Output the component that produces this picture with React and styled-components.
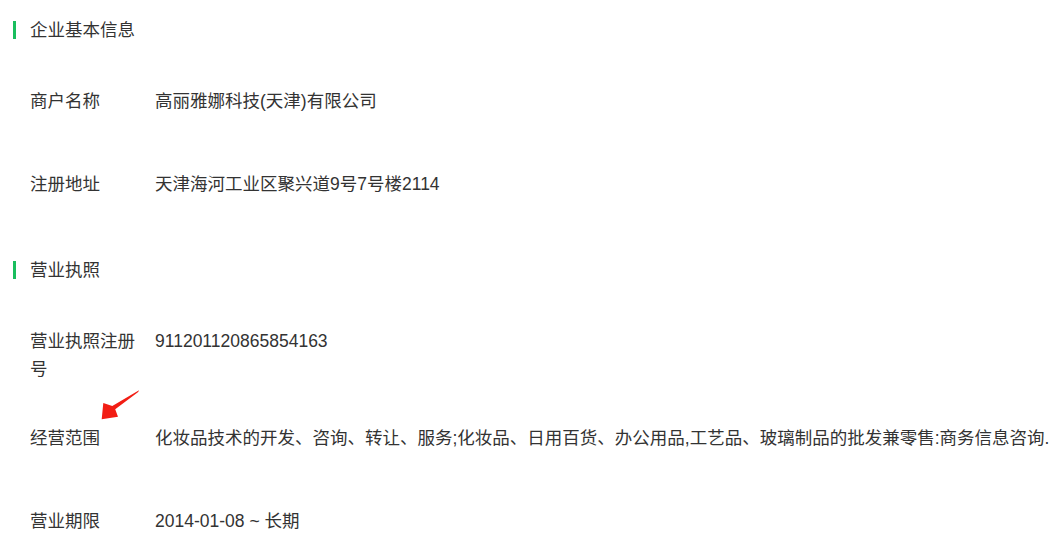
import React from "react";
import styled, { createGlobalStyle } from "styled-components";

const Global = createGlobalStyle`
  html, body { margin: 0; padding: 0; background: #fff; }
  body {
    font-family: "Liberation Sans", "Noto Sans CJK SC", sans-serif;
    color: #333;
    font-size: 17.5px;
    line-height: 28px;
  }
`;

const Page = styled.div`
  display: flex;
  flex-direction: column;
  gap: 7.5px;
  width: 1064px;
`;

const Section = styled.section`
  display: flex;
  flex-direction: column;
`;

const SectionTitle = styled.h2`
  margin: 0;
  display: flex;
  align-items: center;
  gap: 14px;
  padding: 16px 0 22.5px 13px;
  font-size: 17.5px;
  font-weight: normal;
  line-height: 28px;
  color: #333;
  &::before {
    content: "";
    display: block;
    width: 3px;
    height: 18px;
    background: #19be5e;
  }
`;

const Row = styled.div`
  display: flex;
  align-items: flex-start;
  box-sizing: border-box;
  min-height: 83px;
  padding: 20.5px 0 20.5px 30px;
`;

const Label = styled.div`
  position: relative;
  flex: 0 0 112px;
  margin-right: 13px;
  line-height: 28px;
`;

const Value = styled.div`
  flex: 1;
  white-space: nowrap;
  line-height: 28px;
`;

const Pointer = styled.svg`
  position: absolute;
  left: 70px;
  top: -38px;
  width: 42px;
  height: 36px;
  pointer-events: none;
`;

function Arrow() {
  // coordinates relative to page offset (100, 386)
  return (
    <Pointer viewBox="0 0 42 36">
      <polygon
        fill="#f21d14"
        points="39,4.3 12.3,20 3.3,17 1.7,33.2 18,30.8 15.2,23.2 38.2,6"
      />
    </Pointer>
  );
}

const sections = [
  {
    title: "企业基本信息",
    rows: [
      ["商户名称", "高丽雅娜科技(天津)有限公司"],
      ["注册地址", "天津海河工业区聚兴道9号7号楼2114"],
    ],
  },
  {
    title: "营业执照",
    rows: [
      ["营业执照注册号", "911201120865854163"],
      [
        "经营范围",
        "化妆品技术的开发、咨询、转让、服务;化妆品、日用百货、办公用品,工艺品、玻璃制品的批发兼零售:商务信息咨询.",
        true,
      ],
      ["营业期限", "2014-01-08 ~ 长期"],
    ],
  },
];

export default function App() {
  return (
    <>
      <Global />
      <Page>
        {sections.map((s) => (
          <Section key={s.title}>
            <SectionTitle>{s.title}</SectionTitle>
            {s.rows.map(([label, value, marked]) => (
              <Row key={label}>
                <Label>
                  {label}
                  {marked && <Arrow />}
                </Label>
                <Value>{value}</Value>
              </Row>
            ))}
          </Section>
        ))}
      </Page>
    </>
  );
}
